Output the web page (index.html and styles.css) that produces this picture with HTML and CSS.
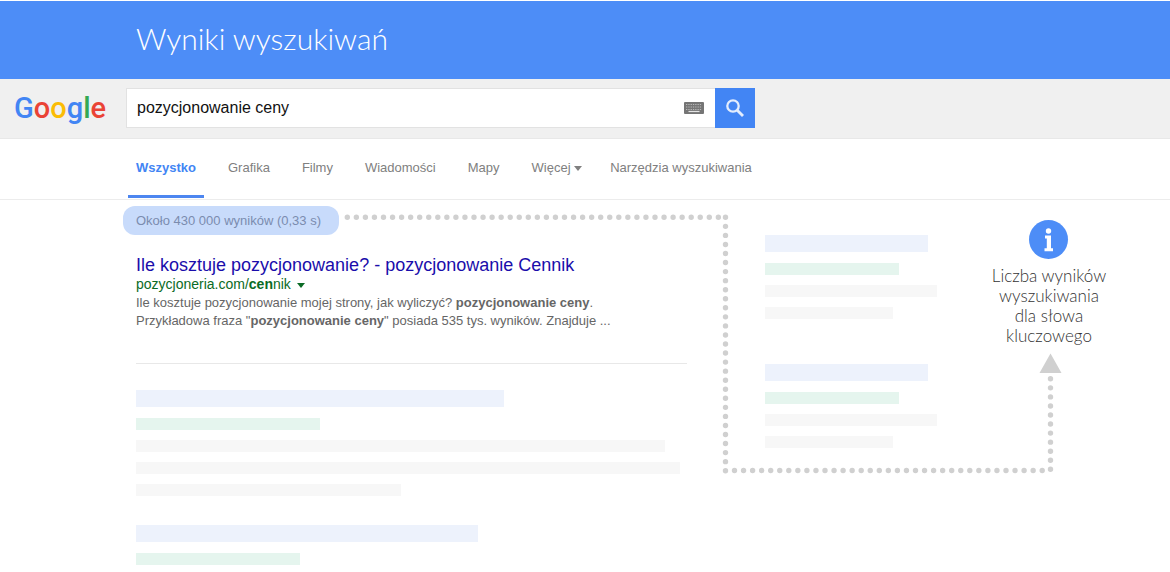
FILE: index.html
```html
<!DOCTYPE html>
<html lang="pl">
<head>
    <meta charset="UTF-8">
    <meta name="viewport" content="width=device-width, initial-scale=1.0">
    <title>Wyniki wyszukiwań</title>
    <link rel="stylesheet" href="styles.css">
</head>
<body>
    <header class="banner">
        <h1>Wyniki wyszukiwań</h1>
    </header>

    <div class="search-bar">
        <a class="logo" href="#" aria-label="Google"><span class="blue">G</span><span class="red">o</span><span class="yellow">o</span><span class="blue">g</span><span class="green">l</span><span class="red">e</span></a>
        <form class="search-form">
            <input type="text" aria-label="Szukaj" value="pozycjonowanie ceny">
            <svg class="keyboard" width="20" height="12" viewBox="0 0 20 12">
                <rect width="20" height="12" rx="1" fill="#757575"/>
                <path d="M2 2.5h16M2 5h16M2 7.5h16" stroke="#b9b9b9" stroke-width="1.2" stroke-dasharray="1.3 1"/>
                <path d="M4.5 9.5h11" stroke="#e4e4e4" stroke-width="1.2"/>
            </svg>
            <button type="submit" aria-label="Szukaj">
                <svg width="20" height="20" viewBox="0 0 20 20" fill="none" stroke="#e3edfd">
                    <circle cx="8" cy="8" r="5.7" stroke-width="2.3"/>
                    <path d="M12 12l6 6" stroke-width="2.8"/>
                </svg>
            </button>
        </form>
    </div>

    <nav class="tabs">
        <a class="active" href="#">Wszystko</a>
        <a href="#">Grafika</a>
        <a href="#">Filmy</a>
        <a href="#">Wiadomości</a>
        <a href="#">Mapy</a>
        <a class="more" href="#">Więcej <span class="caret"></span></a>
        <a href="#">Narzędzia wyszukiwania</a>
    </nav>

    <main class="content">
        <section class="results">
            <p class="stats">Około 430 000 wyników (0,33 s)</p>
            <article class="result">
                <h2><a href="#">Ile kosztuje pozycjonowanie? - pozycjonowanie Cennik</a></h2>
                <p class="url">pozycjoneria.com/<b>cen</b>nik <span class="caret"></span></p>
                <p class="snippet">Ile kosztuje pozycjonowanie mojej strony, jak wyliczyć? <b>pozycjonowanie ceny</b>.<br>
                Przykładowa fraza "<b>pozycjonowanie ceny</b>" posiada 535 tys. wyników. Znajduje ...</p>
            </article>
            <div class="placeholder first">
                <div class="bar title"></div>
                <div class="bar link"></div>
                <div class="bar line"></div>
                <div class="bar line wide"></div>
                <div class="bar line short"></div>
            </div>
            <div class="placeholder second">
                <div class="bar title"></div>
                <div class="bar link"></div>
            </div>
        </section>

        <aside class="ads">
            <div class="placeholder">
                <div class="bar title"></div>
                <div class="bar link"></div>
                <div class="bar line"></div>
                <div class="bar line short"></div>
            </div>
            <div class="placeholder">
                <div class="bar title"></div>
                <div class="bar link"></div>
                <div class="bar line"></div>
                <div class="bar line short"></div>
            </div>
        </aside>

        <aside class="info">
            <svg width="40" height="40" viewBox="0 0 40 40">
                <circle cx="19.5" cy="19.5" r="19.5" fill="#4d8df7"/>
                <circle cx="19.5" cy="11" r="2.7" fill="#fff"/>
                <path d="M16 15.5h6v12.7h2v3h-8.5v-3h2.3v-9.7h-1.8z" fill="#fff"/>
            </svg>
            <p>Liczba wyników<br>wyszukiwania<br>dla słowa<br>kluczowego</p>
        </aside>

        <!-- dotted line from the result count to the description -->
        <svg class="connector" width="1170" height="300" viewBox="0 200 1170 300">
            <g fill="none" stroke="#d0d0d0" stroke-width="5.4" stroke-linecap="round" stroke-dasharray="0 9.05">
                <path d="M347.3 217.3H719"/>
                <path d="M725.5 217.3V471"/>
                <path d="M734.5 470.5H1043"/>
                <path d="M1050.5 469.3V378"/>
            </g>
            <path d="M1050.5 353.5l11 19.5h-22z" fill="#d0d0d0"/>
        </svg>
    </main>
</body>
</html>
```

FILE: styles.css
```css
* {
    box-sizing: border-box;
    margin: 0;
    padding: 0;
}
body {
    background-color: #fff;
    font-family: "Liberation Sans", Arial, sans-serif;
    font-size: 13px;
}
a {
    text-decoration: none;
}

/* Banner */
.banner {
    display: flex;
    align-items: center;
    height: 79px;
    padding-bottom: 4px;
    padding-left: 136px;
    border-top: 1px solid #fff;
    background-color: #4d8df7;
}
.banner h1 {
    color: #fff;
    font-family: Lato, sans-serif;
    font-size: 30px;
    font-weight: 300;
}

/* Search bar */
.search-bar {
    display: flex;
    align-items: center;
    height: 60px;
    padding-bottom: 2px;
    padding-left: 14px;
    border-bottom: 1px solid #e8e8e8;
    background-color: #f0f0f0;
}
.logo {
    width: 112px;
    font-family: Roboto, sans-serif;
    font-size: 29px;
    font-weight: 500;
}
.blue {
    color: #4285f4;
}
.red {
    color: #ea4335;
}
.yellow {
    color: #fbbc05;
}
.green {
    color: #34a853;
}
.search-form {
    display: flex;
    align-items: center;
    width: 629px;
    height: 40px;
    border: 1px solid #e2e2e2;
    border-right: none;
    background-color: #fff;
}
.search-form input {
    flex: 1;
    padding-left: 10px;
    border: none;
    outline: none;
    background-color: transparent;
    color: #111;
    font-family: inherit;
    font-size: 16px;
}
.keyboard {
    margin-right: 11px;
}
.search-form button {
    display: flex;
    align-items: center;
    justify-content: center;
    width: 40px;
    height: 40px;
    border: none;
    background-color: #4285f4;
}

/* Tabs */
.tabs {
    display: flex;
    gap: 32px;
    height: 61px;
    padding-left: 136px;
    border-bottom: 1px solid #ececec;
}
.tabs a {
    color: #808080;
    line-height: 57px;
    white-space: nowrap;
}
.tabs .active {
    height: 59px;
    margin: 0 -8px;
    padding: 0 8px;
    border-bottom: 3px solid #4d86f0;
    color: #4285f4;
    font-weight: bold;
}
.tabs .more {
    margin-right: -4px;
}
.caret {
    display: inline-block;
    border: 4px solid transparent;
    border-top: 5px solid currentColor;
    border-bottom: none;
    vertical-align: middle;
}

/* Results */
.content {
    position: relative;
    display: flex;
    align-items: flex-start;
    padding-left: 136px;
}
.results {
    width: 551px;
    padding-top: 6px;
}
.stats {
    width: 216px;
    margin-left: -13px;
    padding-left: 13px;
    border-radius: 12px;
    background-color: #c8dbfb;
    color: #7b8caf;
    line-height: 29px;
}
.result {
    margin-top: 19px;
    padding-bottom: 33px;
    border-bottom: 1px solid #e8e8e8;
}
.result h2 {
    font-size: 18px;
    font-weight: normal;
    line-height: 22px;
}
.result h2 a {
    color: #1a0dab;
}
.url {
    color: #0b6b25;
    font-size: 14px;
    line-height: 17px;
}
.url .caret {
    margin-left: 2px;
}
.snippet {
    padding-top: 1px;
    color: #666;
    line-height: 18px;
    white-space: nowrap;
}

/* Grey placeholders */
.bar {
    height: 12px;
    margin-top: 10px;
}
.bar.title {
    height: 17px;
    margin-top: 0;
    background-color: #edf2fc;
}
.bar.link {
    margin-top: 11px;
    background-color: #e5f5ee;
}
.bar.line {
    background-color: #f7f7f7;
}
.first {
    margin-top: 26px;
}
.first .title {
    width: 368px;
}
.first .link {
    width: 184px;
}
.first .line {
    width: 529px;
}
.first .wide {
    width: 544px;
}
.first .short {
    width: 265px;
}
.second {
    margin-top: 29px;
}
.second .title {
    width: 342px;
}
.second .link {
    width: 164px;
}
.ads {
    display: grid;
    gap: 45px;
    width: 172px;
    margin-left: 78px;
    padding-top: 35px;
}
.ads .title {
    width: 163px;
}
.ads .link {
    width: 134px;
}
.ads .short {
    width: 128px;
}

/* Description */
.info {
    width: 136px;
    margin-left: 44px;
    padding-top: 20px;
    color: #333;
    font-family: Lato, sans-serif;
    font-size: 17px;
    font-weight: 300;
    line-height: 20px;
    text-align: center;
}
.info svg {
    display: block;
    margin: 0 auto 6px;
}
.connector {
    position: absolute;
    top: 0;
    left: 0;
    pointer-events: none;
}
```
